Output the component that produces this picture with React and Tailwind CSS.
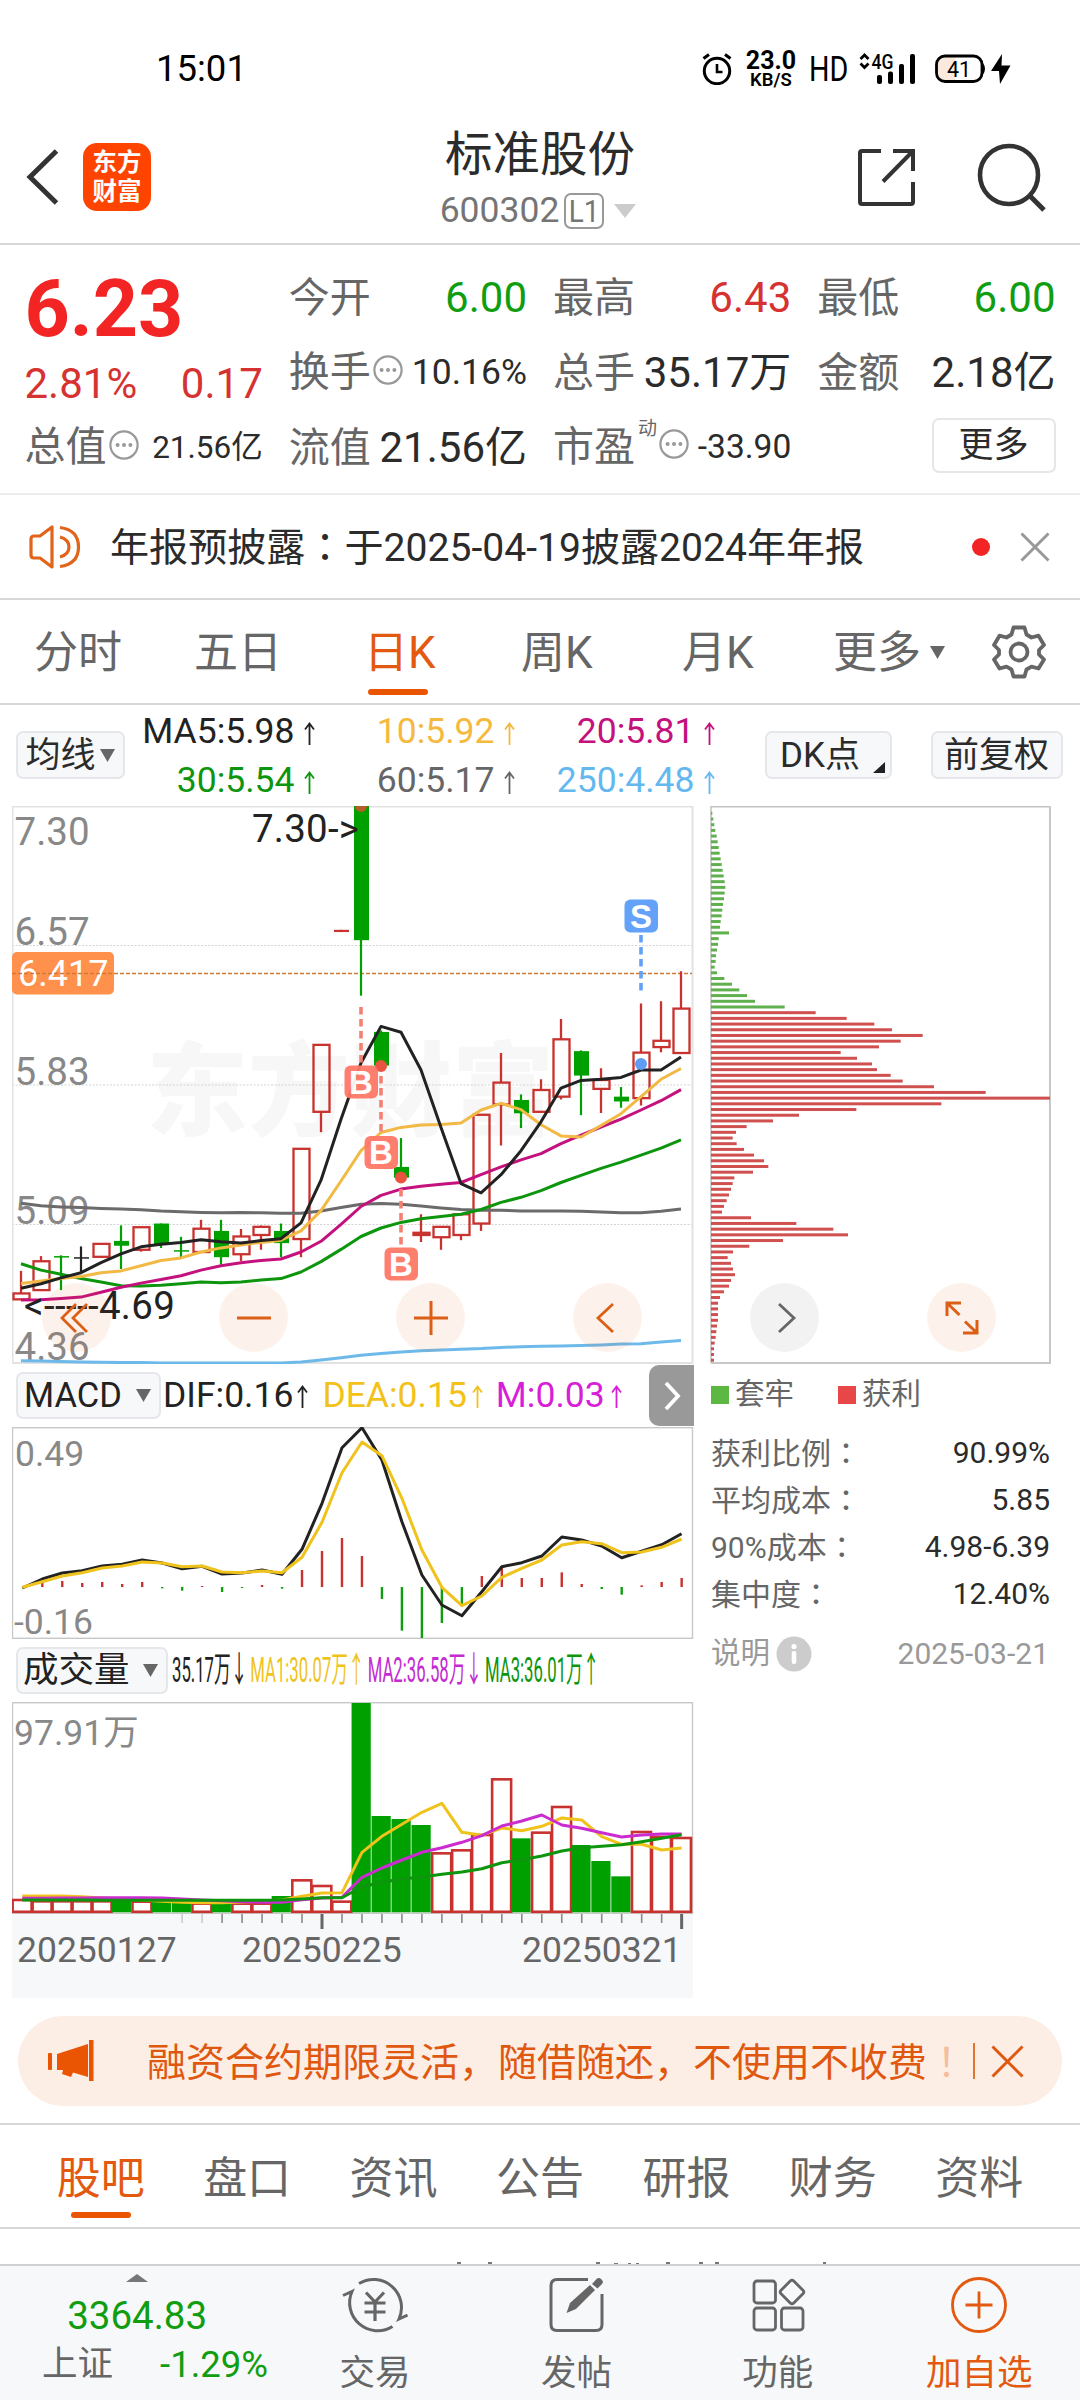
import React from "react";

const FONT = "font-['Roboto','Noto_Sans_CJK_SC',sans-serif]";

/* ---------- chart data (vertical values are pixels in each panel's own scale) ---------- */

// index, kind, body top, body bottom, wick top, wick bottom
const CANDLES = [
  [0, "r", 1361, 1377, 1300, 1377],
  [1, "r", 1274, 1352, 1260, 1352],
  [2, "g", 1260, 1264, 1258, 1352],
  [3, "k", 1263, 1267, 1234, 1305],
  [4, "r", 1227, 1262, 1227, 1264],
  [5, "g", 1219, 1232, 1177, 1295],
  [6, "r", 1182, 1243, 1182, 1248],
  [7, "g", 1172, 1228, 1172, 1238],
  [8, "g", 1244, 1248, 1208, 1265],
  [9, "r", 1186, 1249, 1162, 1249],
  [10, "g", 1192, 1263, 1162, 1283],
  [11, "r", 1207, 1255, 1187, 1273],
  [12, "r", 1181, 1203, 1177, 1243],
  [13, "g", 1192, 1225, 1172, 1263],
  [14, "r", 970, 1214, 970, 1263],
  [15, "r", 689, 870, 689, 925],
  [16, "l", 378, 384, 378, 384],
  [17, "g", 43, 406, 43, 556],
  [18, "g", 654, 745, 650, 745],
  [19, "g", 1019, 1048, 941, 1048],
  [20, "r", 1197, 1203, 1147, 1222],
  [21, "r", 1181, 1209, 1181, 1243],
  [22, "r", 1147, 1203, 1147, 1217],
  [23, "r", 878, 1172, 878, 1192],
  [24, "r", 791, 850, 711, 961],
  [25, "g", 838, 874, 823, 914],
  [26, "r", 811, 870, 782, 870],
  [27, "r", 674, 829, 619, 837],
  [28, "g", 706, 772, 704, 879],
  [29, "r", 784, 808, 752, 873],
  [30, "g", 829, 842, 803, 859],
  [31, "r", 710, 833, 577, 853],
  [32, "r", 678, 695, 571, 709],
  [33, "r", 591, 711, 490, 711],
];

const MA5 = [1347, 1335, 1319, 1305, 1278, 1254, 1235, 1228, 1223, 1216, 1221, 1225, 1218, 1213, 1170, 1055, 890, 738, 639, 655, 757, 912, 1064, 1089, 1040, 975, 897, 806, 785, 782, 777, 757, 757, 722];
const MA10 = [1334, 1327, 1321, 1315, 1305, 1300, 1286, 1272, 1265, 1249, 1238, 1230, 1223, 1217, 1192, 1137, 1057, 975, 926, 912, 906, 904, 900, 865, 847, 864, 905, 935, 938, 907, 875, 829, 782, 753];
const MA20 = [1379, 1378, 1375, 1371, 1358, 1344, 1333, 1323, 1313, 1298, 1286, 1278, 1272, 1268, 1249, 1220, 1174, 1126, 1096, 1079, 1071, 1066, 1061, 1040, 1019, 1000, 983, 956, 933, 911, 890, 865, 840, 810];
const MA30 = [1281, 1298, 1309, 1321, 1330, 1340, 1341, 1339, 1335, 1330, 1332, 1330, 1325, 1321, 1303, 1275, 1242, 1207, 1184, 1169, 1159, 1153, 1147, 1134, 1115, 1101, 1083, 1061, 1042, 1023, 1006, 987, 968, 946];
const MA60 = [1117, 1124, 1127, 1129, 1131, 1133, 1135, 1138, 1140, 1142, 1143, 1142, 1143, 1144, 1144, 1138, 1129, 1120, 1118, 1120, 1125, 1130, 1134, 1136, 1136, 1138, 1138, 1138, 1139, 1141, 1143, 1143, 1139, 1133];
const MA250 = [1543, 1544, 1545, 1546, 1547, 1548, 1548, 1549, 1549, 1549, 1549, 1549, 1549, 1549, 1546, 1541, 1535, 1528, 1523, 1519, 1516, 1514, 1512, 1510, 1507, 1505, 1504, 1503, 1502, 1500, 1498, 1497, 1492, 1488];

const DIF = [684, 657, 639, 632, 618, 613, 600, 609, 626, 619, 642, 639, 630, 643, 568, 430, 263, 203, 300, 485, 645, 735, 767, 695, 620, 608, 588, 531, 540, 558, 593, 574, 554, 521];
const DEA = [682, 665, 648, 638, 624, 618, 606, 609, 620, 618, 636, 638, 633, 638, 592, 487, 338, 246, 287, 415, 570, 682, 737, 708, 652, 625, 600, 555, 545, 551, 578, 576, 562, 537];
const MACD = [681, 663, 663, 669, 666, 672, 666, 685, 692, 678, 696, 684, 675, 686, 630, 573, 534, 588, 717, 812, 834, 789, 738, 648, 622, 654, 654, 637, 672, 687, 704, 676, 666, 654];

const VOL = "r657 r661 r661 r661 r661 g662 r662 g664 g666 r668 g666 r668 r668 g648 r598 r615 r662 g69 g408 g417 g435 r517 r508 r462 r295 g475 r455 r378 g495 g543 g589 r453 r468 r471"
  .split(" ")
  .map((v) => [v[0], +v.slice(1)]);
const VMA1 = [648, 648, 648, 650, 654, 657, 660, 664, 667, 668, 668, 666, 664, 660, 649, 639, 638, 517, 469, 433, 397, 370, 457, 466, 444, 452, 439, 414, 420, 470, 493, 493, 510, 504];
const VMA2 = [655, 655, 654, 654, 653, 653, 653, 654, 657, 660, 662, 665, 667, 667, 659, 654, 652, 592, 564, 540, 517, 503, 487, 467, 438, 423, 405, 435, 445, 458, 471, 465, 462, 462];
const VMA3 = [660, 660, 660, 660, 661, 661, 661, 661, 661, 661, 661, 661, 661, 660, 657, 653, 653, 620, 607, 597, 591, 583, 576, 566, 548, 539, 528, 513, 503, 499, 494, 485, 475, 464];

const CHIPS = [67, 70, 73, 76, 80, 83, 86, 89, 92, 95, 98, 101, 104, 106, 104, 102, 99, 97, 95, 92, 90, 117, 86, 84, 81, 78, 77, 74, 81, 103, 126, 148, 171, 195, 284, 377, 470, 553, 606, 698, 632, 567, 452, 501, 546, 561, 602, 638, 732, 887, 1080, 754, 499, 327, 249, 170, 138, 128, 140, 162, 192, 222, 235, 189, 133, 128, 123, 117, 110, 102, 96, 183, 319, 430, 474, 279, 178, 129, 113, 123, 129, 135, 123, 117, 102, 90, 84, 84, 84, 84, 81, 79, 77, 74, 72, 72, 72];

const ky = (v) => 790 + v / 2.7034;
const kx = (i) => 21 + 20 * i;
const my = (v) => 1360 + v / 3;
const mx = (i) => 22.3 + 19.98 * i;
const vy = (v) => 1680 + v / 3;
const line = (values, fx, fy) => values.map((v, i) => `${fx(i).toFixed(1)},${fy(v).toFixed(1)}`).join(" ");

/* ---------- small pieces ---------- */

function More({ className = "" }) {
  return (
    <svg width="30" height="30" viewBox="0 0 30 30" className={className}>
      <circle cx="15" cy="15" r="13.6" fill="none" stroke="#999" strokeWidth="2.2" />
      <circle cx="8.6" cy="15" r="2" fill="#999" />
      <circle cx="15" cy="15" r="2" fill="#999" />
      <circle cx="21.4" cy="15" r="2" fill="#999" />
    </svg>
  );
}

function Caret({ w = 15, h = 13, className = "" }) {
  return (
    <svg width={w} height={h} viewBox="0 0 15 13" preserveAspectRatio="none" className={className}>
      <path d="M0 0H15L7.5 13Z" fill="currentColor" />
    </svg>
  );
}

function UpArrow({ className = "" }) {
  return (
    <svg width="11" height="23" viewBox="0 0 11 23" className={className} fill="none" stroke="currentColor" strokeWidth="1.8">
      <path d="M5.5 23V2M1 7.5L5.5 1.5L10 7.5" />
    </svg>
  );
}

function StatusBar() {
  return (
    <div className="flex h-[137px] items-center pl-[156px] pr-[68px] text-black">
      <span className="pt-[2px] text-[36.500px] leading-none">15:01</span>
      <svg className="ml-auto" width="30" height="32" viewBox="0 0 30 32" fill="none" stroke="#000" strokeWidth="3">
        <circle cx="15" cy="18" r="12.7" />
        <path d="M15 11v8h5.5" strokeWidth="2.6" />
        <path d="M1.5 5.5L7 1.5M28.5 5.5L23 1.5" />
      </svg>
      <div className="ml-[14px] mt-[2px] flex w-[50px] flex-col items-center">
        <span className="text-[25px] font-bold leading-[19px]">23.0</span>
        <span className="mt-[1px] whitespace-nowrap text-[18.5px] font-semibold leading-[18px]">KB/S</span>
      </div>
      <span className="ml-[13px] w-[41px] origin-left scale-x-[0.82] pt-[1px] text-[35px] leading-none">HD</span>
      <svg className="ml-[9px]" width="60" height="32" viewBox="0 0 60 32">
        <path d="M1.5 6L5.5 2L9.5 6M1.5 10.5L5.5 14.5L9.5 10.5" fill="none" stroke="#000" strokeWidth="2.8" />
        <text x="12.5" y="16" className="text-[20px] font-medium" textLength="22" lengthAdjust="spacingAndGlyphs">4G</text>
        <rect x="18" y="22" width="5" height="9" rx="2" />
        <rect x="29" y="18.500" width="5" height="12.500" rx="2" />
        <rect x="40" y="11" width="5" height="20" rx="2" />
        <rect x="51" y="1" width="5" height="30" rx="2" />
      </svg>
      <svg className="ml-[15px]" width="78" height="32" viewBox="0 0 78 32">
        <rect x="2.500" y="3" width="45.500" height="25.500" rx="8.500" fill="#fff" />
        <path d="M11 4H21V27H11Q4 27 4 19V12Q4 4 11 4Z" fill="#fae9dc" />
        <rect x="2.500" y="3" width="45.500" height="25.500" rx="8.500" fill="none" stroke="#000" strokeWidth="2.800" />
        <path d="M49 10Q53 15.700 49 21.500Z" />
        <text x="13" y="23.500" className="text-[21.500px]">41</text>
        <path d="M68 1L57 18H65L66 31L76.500 12.500H67.500Z" />
      </svg>
    </div>
  );
}

function NavBar() {
  return (
    <div className="flex h-[108px] items-start border-b-2 border-[#d9d9d9]">
      <div className="flex w-[300px] items-center pl-[25px] pt-[6px]">
        <svg width="34" height="56" viewBox="0 0 34 56" fill="none" stroke="#333" strokeWidth="5">
          <path d="M31.500 2L5 28L31.500 54" />
        </svg>
        <div className="ml-[24px] flex h-[68px] w-[68px] flex-col items-center justify-center rounded-[14px] bg-[#ff4400] text-[24.5px] font-bold leading-[29px] text-white">
          <span>东方</span>
          <span>财富</span>
        </div>
      </div>
      <div className="flex w-[480px] flex-col items-center">
        <h1 className="mt-[-6px] text-[47.5px] leading-[48px] text-[#2b2b2b]">标准股份</h1>
        <div className="mt-[14px] flex items-center pr-[4px] text-[35.500px] leading-none text-[#757575]">
          <span>600302</span>
          <span className="ml-[5px] flex h-[36px] w-[40px] items-center justify-center rounded-[7px] border-2 border-[#999] text-[31px] leading-none">
            <span className="scale-x-90">L1</span>
          </span>
          <Caret w={22} h={14} className="ml-[10px] text-[#ccc]" />
        </div>
      </div>
      <div className="flex w-[300px] items-center pl-[77px] pt-[6px]">
        <svg width="60" height="60" viewBox="0 0 60 60" fill="none" stroke="#333" strokeWidth="4">
          <path d="M24 3H5Q3 3 3 5V54Q3 56 5 56H54Q56 56 56 54V34" />
          <path d="M36 3H56V23M55 4L26 33.500" />
        </svg>
        <svg className="ml-[60px]" width="70" height="70" viewBox="0 0 70 70" fill="none" stroke="#333" strokeWidth="4.600">
          <circle cx="32" cy="32" r="29" />
          <path d="M53 53L67 67" strokeWidth="5" />
        </svg>
      </div>
    </div>
  );
}

function Cell({ label, value, valueClass, info, sup }) {
  return (
    <div className="flex items-center leading-none">
      <span className="text-[41px] text-[#666]">{label}</span>
      {sup && <span className="mb-[38px] ml-[3px] text-[19px] text-[#666]">{sup}</span>}
      {info && <More className="ml-[2px] mb-[6px]" />}
      <span className={"ml-auto whitespace-nowrap " + valueClass}>{value}</span>
    </div>
  );
}

function Quote() {
  return (
    <div className="h-[250px] border-b-2 border-[#ececec] px-[24.500px] pt-[14px]">
      <div className="grid grid-cols-4 gap-x-[26px]">
        <div className="row-span-2 flex flex-col">
          <div className="pt-[11px] text-[79px] font-bold leading-[78px] text-[#f22424]">6.23</div>
          <div className="mt-[15px] flex justify-between text-[42px] leading-none text-[#d63232]">
            <span>2.81%</span>
            <span>0.17</span>
          </div>
        </div>
        <div className="h-[75px] pt-[18px]"><Cell label="今开" value="6.00" valueClass="text-[42px] text-[#109d10]" /></div>
        <div className="h-[75px] pt-[18px]"><Cell label="最高" value="6.43" valueClass="text-[42px] text-[#d63232]" /></div>
        <div className="h-[75px] pt-[18px]"><Cell label="最低" value="6.00" valueClass="text-[42px] text-[#109d10]" /></div>
        <div className="h-[75px] pt-[18px]"><Cell label="换手" info value="10.16%" valueClass="text-[35.500px] text-[#2b2b2b]" /></div>
        <div className="h-[75px] pt-[18px]"><Cell label="总手" value="35.17万" valueClass="text-[42px] text-[#2b2b2b]" /></div>
        <div className="h-[75px] pt-[18px]"><Cell label="金额" value="2.18亿" valueClass="text-[42px] text-[#2b2b2b]" /></div>
        <div className="h-[75px] pt-[18px]"><Cell label="总值" info value="21.56亿" valueClass="text-[31.500px] text-[#2b2b2b]" /></div>
        <div className="h-[75px] pt-[18px]"><Cell label="流值" value="21.56亿" valueClass="text-[42px] text-[#2b2b2b]" /></div>
        <div className="flex h-[75px] items-center pt-[1px]"><div className="w-full"><Cell label="市盈" sup="动" info value="-33.90" valueClass="text-[33.500px] text-[#2b2b2b]" /></div></div>
        <div className="flex h-[75px] justify-end pt-[9px]">
          <div className="flex h-[55px] w-[124px] items-center justify-center rounded-[7px] border-2 border-[#e6e6e6] text-[35px] leading-none text-[#2b2b2b]">更多</div>
        </div>
      </div>
    </div>
  );
}

function Notice() {
  return (
    <div className="flex h-[105px] items-center border-b-2 border-[#d8d8d8] pl-[29px] pr-[30px]">
      <svg width="54" height="46" viewBox="0 0 54 46" fill="none" stroke="#e0641a" strokeWidth="3.200">
        <path d="M23 3V43L11 34H5Q2 34 2 31V15Q2 12 5 12H11Z" strokeLinejoin="round" />
        <path d="M31 3.500Q49.500 6 49.500 23T31 42.500" />
        <path d="M31 13Q40 15.500 40 23T31 33" />
      </svg>
      <span className="ml-[27px] text-[39.100px] leading-none text-[#2b2b2b]">
        年报预披露<span className="font-['Noto_Sans_CJK_TC',sans-serif]">：</span>于2025-04-19披露2024年年报
      </span>
      <span className="ml-auto h-[18px] w-[18px] rounded-full bg-[#f22424]" />
      <svg className="ml-[30px]" width="30" height="30" viewBox="0 0 30 30" stroke="#999" strokeWidth="3">
        <path d="M1.500 1.500L28.500 28.500M28.500 1.500L1.500 28.500" />
      </svg>
    </div>
  );
}

function PeriodTabs() {
  return (
    <div className="flex h-[105px] items-center border-b-2 border-[#d8d8d8] pl-[34px] pt-[2px] text-[44px] leading-none text-[#666]">
      <span className="w-[160px]">分时</span>
      <span className="w-[170px]">五日</span>
      <span className="relative w-[157px] text-[#e2590f]">
        日K
        <i className="absolute -bottom-[20px] left-[4px] h-[6px] w-[60px] rounded-full bg-[#ea5504]" />
      </span>
      <span className="w-[161px]">周K</span>
      <span className="w-[151px]">月K</span>
      <span>更多</span>
      <Caret w={15} h={13} className="ml-[9px]" />
      <svg className="mb-[2px] ml-[47px]" width="54" height="54" viewBox="0 0 54 54" fill="none" stroke="#666" strokeWidth="3.800">
        <path d="M21.500 2.500H32.500L34.500 9.500L39.500 12.500L46.500 10.700L52 20L47 25V29.500L52 34.500L46.500 43.500L39.500 41.700L34.500 44.500L32.500 51.500H21.500L19.500 44.500L14.500 41.700L7.500 43.500L2 34.500L7 29.500V25L2 20L7.500 10.700L14.500 12.500L19.500 9.500Z" strokeLinejoin="round" />
        <circle cx="27" cy="27" r="8.500" />
      </svg>
    </div>
  );
}

function MaItem({ text, color }) {
  return (
    <span className={"flex items-center justify-end whitespace-nowrap " + color}>
      {text}
      <UpArrow className="ml-[9px] mt-[3px]" />
    </span>
  );
}

function MaBar() {
  return (
    <div className="flex h-[101px] items-start">
      <div className="ml-[15.500px] mt-[26px] flex h-[48px] w-[109px] items-center rounded-[7px] border-2 border-[#e6e7ea] bg-[#f7f8fa] pl-[8px] text-[35px] leading-none text-[#2b2b2b]">
        均线
        <Caret w={15} h={13} className="ml-[4px] text-[#666]" />
      </div>
      <div className="mt-[2px] grid w-[590px] grid-cols-[190px_200px_200px] text-[35.500px] leading-[49px]">
        <MaItem text="MA5:5.98" color="text-[#222]" />
        <MaItem text="10:5.92" color="text-[#f5b93d]" />
        <MaItem text="20:5.81" color="text-[#c4117d]" />
        <MaItem text="30:5.54" color="text-[#0d950d]" />
        <MaItem text="60:5.17" color="text-[#666]" />
        <MaItem text="250:4.48" color="text-[#64b8f0]" />
      </div>
      <div className="relative ml-[50.500px] mt-[26px] flex h-[48px] w-[127px] items-center rounded-[7px] border-2 border-[#e6e7ea] bg-[#f7f8fa] pl-[13px] text-[35px] leading-none text-[#2b2b2b]">
        DK点
        <svg className="absolute bottom-[4px] right-[5px]" width="12" height="11" viewBox="0 0 12 11"><path d="M12 0V11H0Z" fill="#222" /></svg>
      </div>
      <div className="ml-[38.500px] mt-[26px] flex h-[48px] w-[132px] items-center justify-center rounded-[7px] border-2 border-[#e6e7ea] bg-[#f7f8fa] text-[35px] leading-none text-[#2b2b2b]">前复权</div>
    </div>
  );
}

/* ---------- charts ---------- */

function Candle({ c }) {
  const [i, kind, top, bottom, high, low] = c;
  const x = kx(i);
  const t = ky(top);
  const b = ky(bottom);
  if (kind === "r") {
    return (
      <g stroke="#c8322f" strokeWidth="2.3" fill="none">
        <path d={`M${x} ${ky(high)}V${t}M${x} ${b}V${ky(low)}`} />
        <rect x={x - 7.5} y={t} width="16" height={b - t} />
      </g>
    );
  }
  const color = kind === "g" ? "#00a000" : kind === "k" ? "#222" : "#c8322f";
  return (
    <g fill={color}>
      <rect x={x - 1.1} y={ky(high)} width="2.2" height={ky(low) - ky(high)} />
      <rect x={x - 7} y={t} width="15" height={b - t} />
    </g>
  );
}

function Mark({ x, y, letter, color }) {
  return (
    <g>
      <rect x={x - 16.5} y={y} width="33.500" height="33" rx="6" fill={color} />
      <text x={x} y={y + 28} textAnchor="middle" fill="#fff" className="font-['Liberation_Sans',sans-serif] text-[33px] font-bold">{letter}</text>
    </g>
  );
}

function KChart() {
  return (
    <svg className="block" width="682" height="558" viewBox="12 806 682 558">
      <text x="146" y="1128" className="font-['Noto_Sans_CJK_SC',sans-serif] text-[102px] font-black" fill="#f7f7f7">东方财富</text>
      <g stroke="#d4d4d4" strokeWidth="1.200" strokeDasharray="2 1.500">
        <path d="M12 945.500H692M12 1085H692M12 1224.500H692" />
      </g>
      <g className="text-[38.500px]" fill="#888">
        <text x="14.500" y="844.500">7.30</text>
        <text x="14.500" y="944.500">6.57</text>
        <text x="14.500" y="1084.500">5.83</text>
        <text x="14.500" y="1223.500">5.09</text>
        <text x="14.500" y="1360">4.36</text>
      </g>
      <rect x="12.500" y="806.500" width="680" height="556.500" fill="none" stroke="#e2e2e2" strokeWidth="2" />
      <rect x="12" y="952" width="102" height="42.500" rx="5" fill="#ff914d" />
      <text x="18" y="986" className="text-[36px]" fill="#fff">6.417</text>
      <path d="M12 973.500H692" stroke="#cf7a33" strokeWidth="1.600" strokeDasharray="4 2" />
      {CANDLES.map((c) => <Candle key={c[0]} c={c} />)}
      <g fill="none" strokeWidth="3" strokeLinejoin="round">
        <polyline points={line(MA250, kx, ky)} stroke="#6db9ea" />
        <polyline points={line(MA60, kx, ky)} stroke="#6b6b6b" />
        <polyline points={line(MA30, kx, ky)} stroke="#0d950d" />
        <polyline points={line(MA20, kx, ky)} stroke="#c4117d" />
        <polyline points={line(MA10, kx, ky)} stroke="#f2b945" />
        <polyline points={line(MA5, kx, ky)} stroke="#222" />
      </g>
      <text x="252" y="842" className="text-[38.500px]" textLength="107" fill="#222">7.30-&gt;</text>
      <text x="24" y="1319" className="text-[38.500px]" textLength="151" fill="#222">&lt;-----4.69</text>
      <g stroke="#f58072" strokeWidth="3.600" strokeDasharray="7.500 4.500">
        <path d="M361 1007V1066M381 1076V1136M401 1189V1248" />
        <path d="M641 935V991" stroke="#63a1f8" />
      </g>
      <path d="M355 806A6 6 0 0 0 367 806Z" fill="#b55f28" />
      <circle cx="381" cy="1066" r="6" fill="#e8543f" />
      <circle cx="401" cy="1177.500" r="6" fill="#e8543f" />
      <circle cx="641" cy="1064" r="6" fill="#5f9df5" />
      <g opacity="0.94">
        <Mark x={361} y={1065.5} letter="B" color="#ff7867" />
        <Mark x={381} y={1136} letter="B" color="#ff7867" />
        <Mark x={401} y={1247.500} letter="B" color="#ff7867" />
        <Mark x={641} y={899.500} letter="S" color="#5b9cf8" />
      </g>
    </svg>
  );
}

function MacdPanel() {
  return (
    <>
      <div className="relative flex h-[63px] items-center pl-[4px] text-[35.500px] leading-none">
        <div className="flex h-[47px] w-[145px] items-center justify-between rounded-[7px] border-2 border-[#e6e7ea] bg-[#f7f8fa] pl-[6px] pr-[8px] text-[34.500px] text-[#222]">
          MACD
          <Caret w={15} h={13} className="text-[#666]" />
        </div>
        <span className="ml-[2px] flex items-center text-[#222]">DIF:0.16<UpArrow className="ml-[4px] mt-[2px]" /></span>
        <span className="ml-[14px] flex items-center text-[#f2c21a]">DEA:0.15<UpArrow className="ml-[5px] mt-[2px]" /></span>
        <span className="ml-[13px] flex items-center text-[#d81fd8]">M:0.03<UpArrow className="ml-[6px] mt-[2px]" /></span>
        <div className="absolute right-0 top-[1px] flex h-[61px] w-[45px] items-center justify-center rounded-l-[10px] bg-[#999]">
          <svg width="18" height="30" viewBox="0 0 18 30" fill="none" stroke="#fff" strokeWidth="3.800"><path d="M3 2L15 15L3 28" /></svg>
        </div>
      </div>
      <svg className="block" width="682" height="212" viewBox="12 1427 682 212">
        <g className="text-[35.500px]" fill="#888">
          <text x="15" y="1466">0.49</text>
          <text x="14" y="1633.500">-0.16</text>
        </g>
        <rect x="12.500" y="1427.700" width="680" height="210.600" fill="none" stroke="#c8c8c8" strokeWidth="1.400" />
        {MACD.map((v, i) => (
          <rect key={i} x={mx(i) - 1.2} y={Math.min(my(v), my(681))} width="2.400" height={Math.abs(my(v) - my(681))} fill={v < 681 ? "#c8322f" : "#109d10"} />
        ))}
        <g fill="none" strokeWidth="3" strokeLinejoin="round">
          <polyline points={line(DIF, mx, my)} stroke="#222" />
          <polyline points={line(DEA, mx, my)} stroke="#efc31c" />
        </g>
      </svg>
    </>
  );
}

function VolumePanel() {
  return (
    <>
      <div className="flex h-[63px] items-center pl-[4px] leading-none">
        <div className="flex h-[47px] w-[152px] shrink-0 items-center justify-between rounded-[7px] border-2 border-[#e6e7ea] bg-[#f7f8fa] pl-[5px] pr-[8px] text-[35.500px] text-[#222]">
          成交量
          <Caret w={15} h={13} className="text-[#666]" />
        </div>
        <div className="ml-[4px] flex shrink-0 origin-left scale-x-[0.471] items-center gap-[6px] whitespace-nowrap text-[35.500px]">
          <span className="text-[#222]">35.17万↓</span>
          <span className="text-[#efc31c]">MA1:30.07万↑</span>
          <span className="text-[#c32bd0]">MA2:36.58万↓</span>
          <span className="text-[#0d950d]">MA3:36.01万↑</span>
        </div>
      </div>
      <svg className="block" width="682" height="296" viewBox="12 1702 682 296">
        <rect x="12" y="1913" width="681" height="85" fill="#f7f8fa" />
        <text x="14" y="1745" className="text-[35.500px]" fill="#888">97.91万</text>
        <rect x="12.500" y="1702.700" width="680" height="210.600" fill="none" stroke="#c8c8c8" strokeWidth="1.400" />
        {VOL.map(([kind, v], i) =>
          kind === "g" ? (
            <rect key={i} x={mx(i) - 10.400} y={vy(v)} width="19.200" height={1912.300 - vy(v)} fill="#00a000" />
          ) : (
            <rect key={i} x={mx(i) - 9.700} y={vy(v) + 1} width="19" height={1910.800 - vy(v)} fill="#fff" stroke="#c8322f" strokeWidth="2.600" />
          )
        )}
        <g fill="none" strokeWidth="3" strokeLinejoin="round">
          <polyline points={line(VMA1, mx, vy)} stroke="#efc31c" />
          <polyline points={line(VMA2, mx, vy)} stroke="#cb2bcf" />
          <polyline points={line(VMA3, mx, vy)} stroke="#0d950d" />
        </g>
        {VOL.map((_, i) =>
          i < 8 ? null : i === 15 || i === 33 ? (
            <rect key={i} x={mx(i) - 1.500} y="1914" width="3" height="15" fill="#666" />
          ) : (
            <rect key={i} x={mx(i) - 0.800} y="1914" width="1.600" height="9" fill={i < 10 ? "#ccc" : "#8a8a8a"} />
          )
        )}
        <g className="text-[35.500px]" fill="#666">
          <text x="17" y="1961.500">20250127</text>
          <text x="242" y="1961.500">20250225</text>
          <text x="522" y="1961.500">20250321</text>
        </g>
      </svg>
    </>
  );
}

function StatRow({ label, value }) {
  return (
    <div className="flex h-[47px] items-center justify-between text-[30px] leading-none">
      <span className="text-[#666]">{label}<span className="font-['Noto_Sans_CJK_TC',sans-serif]">：</span></span>
      <span className="text-[#2b2b2b]">{value}</span>
    </div>
  );
}

function CostPanel() {
  return (
    <div className="ml-[16px] w-[342px]">
      <svg className="block" width="342" height="558" viewBox="710 806 342 558">
        <path d="M711 1363.300V806.700H1050" fill="none" stroke="#c4c4c4" strokeWidth="1.600" />
        <path d="M1050 806V1363H711" fill="none" stroke="#c8c8c8" strokeWidth="2" />
        {CHIPS.map((w, i) => (
          <rect key={i} x="711" y={790 + (63 + 15.4 * i) / 2.7034 - 1.5} width={(w - 63) / 3} height="3" fill={i < 35 ? "#60b04e" : "#d04f4f"} />
        ))}
      </svg>
      <div className="flex h-[60px] items-center pt-[1px] text-[29.500px] leading-none text-[#666]">
        <i className="ml-px h-[18px] w-[18px] bg-[#5cb843]" />
        <span className="ml-[6px]">套牢</span>
        <i className="ml-[44px] h-[18px] w-[18px] bg-[#e84747]" />
        <span className="ml-[6px]">获利</span>
      </div>
      <div className="pl-[1px] pr-[2px] pt-[5px]">
        <StatRow label="获利比例" value="90.99%" />
        <StatRow label="平均成本" value="5.85" />
        <StatRow label="90%成本" value="4.98-6.39" />
        <StatRow label="集中度" value="12.40%" />
        <div className="mt-[13px] flex h-[47px] items-center text-[29.500px] leading-none text-[#999]">
          说明
          <svg className="ml-[6px]" width="36" height="36" viewBox="0 0 36 36">
            <circle cx="18" cy="18" r="17.500" fill="#ccc" />
            <circle cx="18" cy="10.500" r="2.600" fill="#fff" />
            <rect x="15.700" y="15" width="4.600" height="13" rx="2" fill="#fff" />
          </svg>
          <span className="ml-auto pr-[1px] text-[30px]">2025-03-21</span>
        </div>
      </div>
    </div>
  );
}

const ROUND = "flex h-[69px] w-[69px] items-center justify-center rounded-full ";

function ChartControls() {
  return (
    <div className="absolute left-[42px] top-[477px] flex gap-[108px] text-[#dc5f16]">
      <div className={ROUND + "bg-[#ea5504]/8"}>
        <svg className="mr-[5px]" width="28" height="30" viewBox="0 0 28 30" fill="none" stroke="currentColor" strokeWidth="2.800"><path d="M16 1L2 15L16 29M27 1L13 15L27 29" /></svg>
      </div>
      <div className={ROUND + "bg-[#ea5504]/8"}>
        <svg width="34" height="34" viewBox="0 0 34 34" fill="none" stroke="currentColor" strokeWidth="3"><path d="M0 17H34" /></svg>
      </div>
      <div className={ROUND + "bg-[#ea5504]/8"}>
        <svg width="34" height="34" viewBox="0 0 34 34" fill="none" stroke="currentColor" strokeWidth="3"><path d="M0 17H34M17 0V34" /></svg>
      </div>
      <div className={ROUND + "bg-[#ea5504]/8"}>
        <svg width="28" height="32" viewBox="0 0 28 32" fill="none" stroke="currentColor" strokeWidth="2.800"><path d="M19 2L4 16L19 30" /></svg>
      </div>
      <div className={ROUND + "bg-black/5 text-[#666]"}>
        <svg width="28" height="32" viewBox="0 0 28 32" fill="none" stroke="currentColor" strokeWidth="2.800"><path d="M8 2L23 16L8 30" /></svg>
      </div>
      <div className={ROUND + "bg-[#ea5504]/8"}>
        <svg width="34" height="34" viewBox="0 0 34 34" fill="none" stroke="currentColor" strokeWidth="3"><path d="M16 2H2V15M2 2L14.500 14M32 19V32H18M32 32L20 20.500" /></svg>
      </div>
    </div>
  );
}

function Banner() {
  return (
    <div className="mx-[18px] mt-[18px] flex h-[90px] items-center rounded-full bg-[#fceee5] pl-[30px] text-[#e0580f]">
      <svg width="46" height="42" viewBox="0 0 46 42" fill="#ea5504">
        <rect x="0" y="13" width="4" height="17" rx="1" />
        <path d="M9 14L40 4V37L25 32.500L23 37L14 34L15 30H9Z" />
        <rect x="41" y="0" width="4.500" height="41" />
      </svg>
      <span className="ml-[53px] whitespace-nowrap text-[39px] leading-none">
        融资合约期限灵活，随借随还，不使用不收费
        <span className="font-['Noto_Sans_CJK_TC',sans-serif] text-[#f5bd9c]">！</span>
      </span>
      <i className="ml-[7px] h-[36px] w-[2px] bg-[#e0762f]" />
      <svg className="ml-[16px]" width="33" height="33" viewBox="0 0 33 33" stroke="currentColor" strokeWidth="3"><path d="M1.500 1.500L31.500 31.500M31.500 1.500L1.500 31.500" /></svg>
    </div>
  );
}

function SectionTabs() {
  return (
    <div className="mt-[17px] flex h-[106px] items-center border-y-2 border-[#d6d7d9] px-[27.500px] pt-[6px] text-[44px] leading-none text-[#666]">
      <span className="relative flex-1 text-center text-[#e2590f]">
        股吧
        <i className="absolute -bottom-[17px] left-1/2 h-[6px] w-[60px] -translate-x-1/2 rounded-full bg-[#ea5504]" />
      </span>
      {["盘口", "资讯", "公告", "研报", "财务", "资料"].map((t) => (
        <span key={t} className="flex-1 text-center">{t}</span>
      ))}
    </div>
  );
}

function BottomItem({ label, children, className = "text-[#666]" }) {
  return (
    <div className={"flex w-[202px] flex-col items-center pt-[9px] " + className}>
      {children}
      <span className="mt-[21px] text-[35.500px] leading-none">{label}</span>
    </div>
  );
}

function BottomBar() {
  return (
    <div className="flex h-[137px] border-t-2 border-[#cfd1d4] bg-[#f7f8fa]">
      <div className="flex w-[275px] flex-col items-center pt-[8px] leading-none">
        <svg width="22" height="8" viewBox="0 0 22 8"><path d="M0 8L11 0L22 8Z" fill="#777" /></svg>
        <span className="mt-[15px] text-[38.500px] leading-none text-[#109d10]">3364.83</span>
        <div className="ml-[36px] mt-[11px] flex w-[226px] items-center justify-between">
          <span className="text-[35.500px] text-[#666]">上证</span>
          <span className="text-[36.500px] text-[#109d10]">-1.29%</span>
        </div>
      </div>
      <BottomItem label="交易">
        <svg width="66" height="60" viewBox="0 0 66 60" fill="none" stroke="currentColor" strokeWidth="3">
          <path d="M17 8.500A28 28 0 0 1 57 44L65.500 40" />
          <path d="M50.500 51.500A28 28 0 0 1 10 16.500L1 20.500" />
          <path d="M24 17.500L33 27L42 17.500M22.500 28H43.500M22.500 37H43.500M33 27V46" strokeWidth="3.200" />
        </svg>
      </BottomItem>
      <BottomItem label="发帖">
        <svg width="58" height="60" viewBox="0 0 58 60" fill="none" stroke="currentColor" strokeWidth="3">
          <path d="M41 4.500H10Q4 4.500 4 10.500V49.500Q4 55.500 10 55.500H49Q55 55.500 55 49.500V19" />
          <path d="M19.500 38L23 28L43 10L48 15L29 34Z" fill="currentColor" stroke="none" />
          <path d="M45 9L49.500 4Q52 2 54.500 4.500T55 9L50.500 13.500Z" fill="currentColor" stroke="none" />
        </svg>
      </BottomItem>
      <BottomItem label="功能">
        <svg width="58" height="60" viewBox="0 0 58 60" fill="none" stroke="currentColor" strokeWidth="2.800">
          <rect x="5" y="6" width="21.500" height="22" rx="3" />
          <rect x="5" y="33" width="21.500" height="22" rx="3" />
          <rect x="32.500" y="33" width="21.500" height="22" rx="3" />
          <rect x="34" y="8" width="18" height="18" rx="2.500" transform="rotate(45 43 17)" />
        </svg>
      </BottomItem>
      <BottomItem label="加自选" className="text-[#e2590f]">
        <svg width="60" height="60" viewBox="0 0 60 60" fill="none" stroke="currentColor" strokeWidth="2.800">
          <circle cx="30" cy="30" r="26.500" />
          <path d="M16.500 30H43.500M30 16.500V43.500" />
        </svg>
      </BottomItem>
    </div>
  );
}

export default function App() {
  return (
    <div className={"h-[2400px] w-[1080px] overflow-hidden bg-white " + FONT}>
      <StatusBar />
      <NavBar />
      <Quote />
      <Notice />
      <PeriodTabs />
      <MaBar />
      <div className="relative flex pl-[12px]">
        <div className="w-[682px]">
          <KChart />
          <MacdPanel />
          <VolumePanel />
        </div>
        <CostPanel />
        <ChartControls />
      </div>
      <Banner />
      <SectionTabs />
      <div className="flex h-[35px] items-end pl-[456px]">
        <svg width="372" height="3" viewBox="456 0 372 3" fill="#777">
          <path d="M457 1h4v2h-4zM488 1h4v2h-4zM596 1h4v2h-4zM614 2h4v1h-4zM628 2h3v1h-3zM636 2h3v1h-3zM666 1h4v2h-4zM699 1h4v2h-4zM715 1h4v2h-4zM823 1h3v2h-3z" />
        </svg>
      </div>
      <BottomBar />
    </div>
  );
}
